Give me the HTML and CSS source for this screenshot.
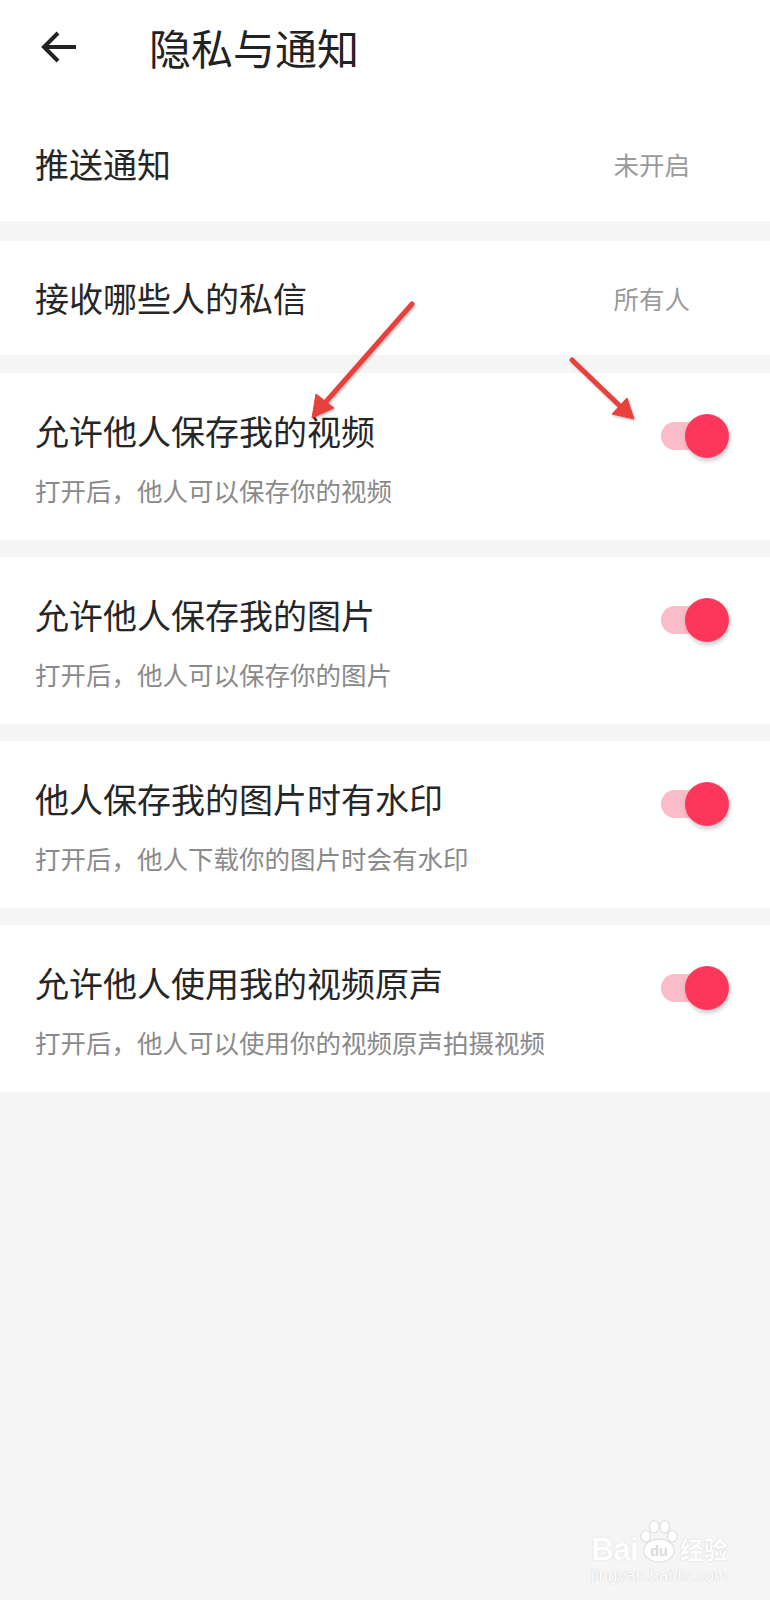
FILE: index.html
```html
<!DOCTYPE html>
<html lang="zh-CN">
<head>
<meta charset="utf-8">
<title>隐私与通知</title>
<link rel="stylesheet" href="styles.css">
</head>
<body>
<div class="page">
  <header class="topbar">
    <svg class="back" width="38" height="34" viewBox="0 0 38 34">
      <path d="M4 17 H36 M18 3 L4 17 L18 31" fill="none" stroke="#222" stroke-width="4" stroke-linecap="butt" stroke-linejoin="miter"/>
    </svg>
    <h1 class="title">隐私与通知</h1>
  </header>

  <div class="row simple first">
    <span class="label">推送通知</span>
    <span class="value">未开启</span>
  </div>

  <div class="row simple">
    <span class="label">接收哪些人的私信</span>
    <span class="value">所有人</span>
  </div>

  <div class="row toggle-row">
    <div class="texts">
      <div class="label">允许他人保存我的视频</div>
      <div class="sub">打开后，他人可以保存你的视频</div>
    </div>
    <span class="switch"><span class="track"></span><span class="thumb"></span></span>
  </div>

  <div class="row toggle-row">
    <div class="texts">
      <div class="label">允许他人保存我的图片</div>
      <div class="sub">打开后，他人可以保存你的图片</div>
    </div>
    <span class="switch"><span class="track"></span><span class="thumb"></span></span>
  </div>

  <div class="row toggle-row">
    <div class="texts">
      <div class="label">他人保存我的图片时有水印</div>
      <div class="sub">打开后，他人下载你的图片时会有水印</div>
    </div>
    <span class="switch"><span class="track"></span><span class="thumb"></span></span>
  </div>

  <div class="row toggle-row">
    <div class="texts">
      <div class="label">允许他人使用我的视频原声</div>
      <div class="sub">打开后，他人可以使用你的视频原声拍摄视频</div>
    </div>
    <span class="switch"><span class="track"></span><span class="thumb"></span></span>
  </div>

  <svg class="annot" width="770" height="1600" viewBox="0 0 770 1600">
    <defs>
      <filter id="sh" x="-20%" y="-20%" width="140%" height="140%">
        <feDropShadow dx="1" dy="1.5" stdDeviation="1.2" flood-color="#000" flood-opacity="0.25"/>
      </filter>
    </defs>
    <g filter="url(#sh)" fill="#e8413c" stroke="#e8413c">
      <line x1="412" y1="304" x2="324" y2="404" stroke-width="5" stroke-linecap="round"/>
      <polygon points="312,418 316,394 334,408" stroke-width="1" stroke-linejoin="round"/>
      <line x1="572" y1="360" x2="622" y2="408" stroke-width="5" stroke-linecap="round"/>
      <polygon points="634,419 612,414 627,398" stroke-width="1" stroke-linejoin="round"/>
    </g>
  </svg>

  <div class="watermark">
    <div class="wm-top">
      <span class="wm-bai">Bai</span>
      <span class="wm-paw">
        <svg width="42" height="46" viewBox="0 0 44 46">
          <g fill="#fff" stroke="#dedede" stroke-width="1.2">
            <ellipse cx="8" cy="18" rx="5" ry="6"/>
            <ellipse cx="17" cy="8" rx="5" ry="6.5"/>
            <ellipse cx="28" cy="8" rx="5" ry="6.5"/>
            <ellipse cx="36" cy="18" rx="5" ry="6"/>
            <ellipse cx="22" cy="33" rx="16" ry="12"/>
          </g>
          <text x="22" y="39" text-anchor="middle" class="wm-du">du</text>
        </svg>
      </span>
      <span class="wm-jy">经验</span>
    </div>
    <div class="wm-url">jingyan.baidu.com</div>
  </div>
</div>
</body>
</html>
```

FILE: styles.css
```css
html, body {
  margin: 0;
  padding: 0;
}

body {
  background: #f5f5f5;
  font-family: "Noto Sans CJK SC", "Noto Sans", sans-serif;
  color: #222;
}

.page {
  position: relative;
  width: 770px;
  min-height: 1600px;
  background: #f5f5f5;
}

.topbar {
  display: flex;
  align-items: center;
  height: 94px;
  padding-left: 40px;
  background: #fff;
}

.back {
  display: block;
  flex: none;
}

.title {
  margin: 0 0 0 71px;
  font-size: 42px;
  font-weight: 400;
  line-height: 1;
  color: #222;
}

.row {
  display: flex;
  align-items: center;
  background: #fff;
  padding-left: 35px;
  margin-bottom: 18px;
}

.row.simple {
  height: 115px;
  justify-content: space-between;
  padding-right: 80px;
}

.row.first {
  height: 127px;
  padding-top: 12px;
  box-sizing: border-box;
  margin-bottom: 20px;
}

.row.first + .row {
  height: 114px;
}

.label {
  font-size: 34px;
  line-height: 44px;
  color: #262626;
}

.value {
  font-size: 25.5px;
  line-height: 34px;
  color: #9a9a9a;
}

.toggle-row {
  height: 167px;
  box-sizing: border-box;
  padding-top: 36px;
  padding-bottom: 33px;
  padding-right: 41px;
  align-items: flex-start;
  justify-content: space-between;
  margin-bottom: 17px;
}

.texts {
  display: flex;
  flex-direction: column;
  gap: 20px;
}

.sub {
  font-size: 25.5px;
  line-height: 34px;
  color: #8a8a8a;
}

.switch {
  position: relative;
  display: block;
  width: 68px;
  height: 44px;
  margin-top: 5px;
  flex: none;
}

.track {
  position: absolute;
  left: 0;
  top: 8px;
  width: 56px;
  height: 28px;
  border-radius: 14px;
  background: #fbbcc9;
}

.thumb {
  position: absolute;
  right: 0;
  top: 0;
  width: 44px;
  height: 44px;
  border-radius: 50%;
  background: #fd375c;
  box-shadow: 1px 3px 4px rgba(0, 0, 0, 0.22);
}

.annot {
  position: absolute;
  left: 0;
  top: 0;
  pointer-events: none;
}

.watermark {
  position: absolute;
  left: 591px;
  top: 1516px;
  display: flex;
  flex-direction: column;
  align-items: flex-start;
  white-space: nowrap;
  color: #fff;
  font-family: "Liberation Sans", Arial, sans-serif;
  pointer-events: none;
}

.wm-top {
  display: flex;
  align-items: flex-end;
  height: 48px;
  white-space: nowrap;
}

.wm-bai {
  font-size: 32px;
  font-weight: 700;
  line-height: 30px;
  color: #fff;
  text-shadow: 0 0 1px #d2d2d2, 0 0 1px #d2d2d2;
  letter-spacing: -1px;
}

.wm-paw {
  flex: none;
}

.wm-paw svg {
  display: block;
}

.wm-du {
  font-family: "Liberation Sans", Arial, sans-serif;
  font-size: 15px;
  font-weight: 700;
  fill: #dadada;
}

.wm-jy {
  font-family: "Noto Sans CJK SC", sans-serif;
  font-size: 24px;
  font-weight: 700;
  line-height: 30px;
  color: #fff;
  text-shadow: 0 0 1px #cfcfcf, 0 0 1px #cfcfcf;
}

.wm-url {
  font-size: 17px;
  line-height: 20px;
  margin-top: 2px;
  color: #fff;
  text-shadow: 0 0 1px #cccccc, 0 0 1px #cccccc;
}
```
